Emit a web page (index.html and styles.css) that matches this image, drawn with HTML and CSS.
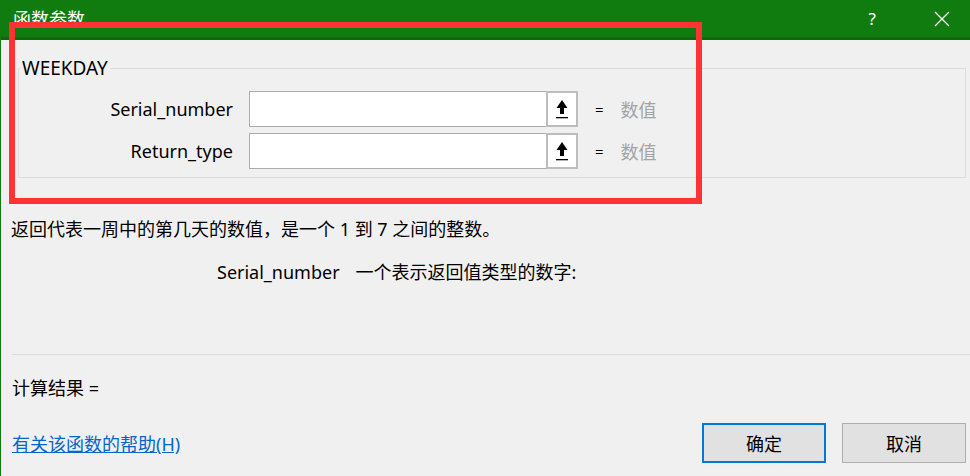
FILE: index.html
```html
<!DOCTYPE html>
<html lang="zh-CN">
<head>
    <meta charset="UTF-8">
    <meta name="viewport" content="width=device-width, initial-scale=1.0">
    <title>函数参数</title>
    <link rel="stylesheet" href="styles.css">
</head>
<body>
    <div class="window">
        <header class="titlebar">
            <span class="title">函数参数</span>
            <span class="help">?</span>
            <span class="close">
                <svg width="16" height="16" viewBox="0 0 16 16"><path d="M1 1 L15 15 M15 1 L1 15" stroke="#fff" stroke-width="1.3" fill="none"/></svg>
            </span>
        </header>
        <div class="content">
            <fieldset class="group">
                <legend>WEEKDAY</legend>
                <div class="args">
                    <label class="arg-label">Serial_number</label>
                    <div class="arg-input">
                        <span class="field"></span>
                        <span class="ref-btn">
                            <svg width="14" height="20" viewBox="0 0 14 20"><path d="M7 1 L12.5 9 L9 9 L9 15 L5 15 L5 9 L1.5 9 Z" fill="#000"/><rect x="1" y="18" width="12" height="1.3" fill="#000"/></svg>
                        </span>
                    </div>
                    <span class="eq">=</span>
                    <span class="value">数值</span>

                    <label class="arg-label">Return_type</label>
                    <div class="arg-input">
                        <span class="field"></span>
                        <span class="ref-btn">
                            <svg width="14" height="20" viewBox="0 0 14 20"><path d="M7 1 L12.5 9 L9 9 L9 15 L5 15 L5 9 L1.5 9 Z" fill="#000"/><rect x="1" y="18" width="12" height="1.3" fill="#000"/></svg>
                        </span>
                    </div>
                    <span class="eq">=</span>
                    <span class="value">数值</span>
                </div>
            </fieldset>

            <p class="desc">返回代表一周中的第几天的数值，是一个 1 到 7 之间的整数。</p>
            <p class="arg-desc"><span class="arg-name">Serial_number</span>一个表示返回值类型的数字:</p>

            <div class="separator"></div>

            <p class="result">计算结果 =</p>

            <div class="footer">
                <a href="#" class="help-link">有关该函数的帮助(H)</a>
                <div class="buttons">
                    <button class="btn btn-default">确定</button>
                    <button class="btn">取消</button>
                </div>
            </div>
        </div>
        <div class="highlight"></div>
    </div>
</body>
</html>
```

FILE: styles.css
```css
body {
    margin: 0;
    padding: 0;
    background-color: #f0f0f0;
    font-family: "Noto Sans", "Noto Sans CJK SC", sans-serif;
    font-size: 18px;
    color: #000;
}
.window {
    position: relative;
    width: 970px;
    height: 476px;
    overflow: hidden;
    border-left: 1px solid #107c10;
    box-sizing: border-box;
}
.titlebar {
    height: 37px;
    background: #107c10;
    border-bottom: 3px solid #0c6a0c;
    display: flex;
    align-items: center;
    color: #fff;
}
.title {
    margin-left: 12px;
    font-size: 18px;
    margin-top: -2px;
    flex: 1;
}
.help {
    font-size: 17px;
    margin-right: 58px;
}
.close {
    display: flex;
    margin-right: 20px;
}
.content {
    padding: 0 0 0 10px;
}
.group {
    margin: 19px 4px 0 7px;
    padding: 0 0 8px 0;
    border: 1px solid #dcdcdc;
    min-width: 0;
}
.group legend {
    padding: 0 2px;
    margin-left: 1px;
    font-size: 19px;
    line-height: 18px;
}
.args {
    display: grid;
    grid-template-columns: 230px 329px auto 1fr;
    row-gap: 6px;
    align-items: center;
    margin-top: 14px;
}
.arg-label {
    text-align: right;
    padding-right: 16px;
}
.arg-input {
    display: flex;
    height: 36px;
    box-sizing: border-box;
    border: 1px solid #acacac;
    background: #fff;
}
.field {
    flex: 1;
}
.ref-btn {
    width: 28px;
    border: 2px solid #bdbdbd;
    margin: -1px -1px -1px 0;
    background: #fff;
    display: flex;
    align-items: center;
    justify-content: center;
}
.eq {
    margin-left: 17px;
    font-size: 15px;
}
.value {
    margin-left: 17px;
    color: #a3a3a3;
}
.desc {
    margin: 39px 0 0 0;
    line-height: 24px;
}
.arg-desc {
    margin: 19px 0 0 206px;
    line-height: 24px;
}
.arg-name {
    margin-right: 16px;
}
.separator {
    height: 0;
    border-top: 1px solid #dcdcdc;
    margin-top: 70px;
    margin-left: 1px;
}
.result {
    margin: 21px 0 0 1px;
    line-height: 24px;
}
.footer {
    display: flex;
    justify-content: space-between;
    align-items: center;
    margin-top: 23px;
    padding-right: 4px;
}
.help-link {
    color: #0066cc;
    margin-left: 1px;
    font-size: 18px;
    text-decoration: underline;
}
.buttons {
    display: flex;
    gap: 16px;
}
.btn {
    width: 124px;
    height: 40px;
    font-family: "Noto Sans", "Noto Sans CJK SC", sans-serif;
    font-size: 18px;
    background: #e1e1e1;
    border: 1px solid #adadad;
    color: #000;
    padding: 0;
}
.btn-default {
    border: 2px solid #0078d7;
}
.highlight {
    position: absolute;
    left: 8px;
    top: 22px;
    width: 681px;
    height: 170px;
    border: 6px solid #ff3333;
}
```
